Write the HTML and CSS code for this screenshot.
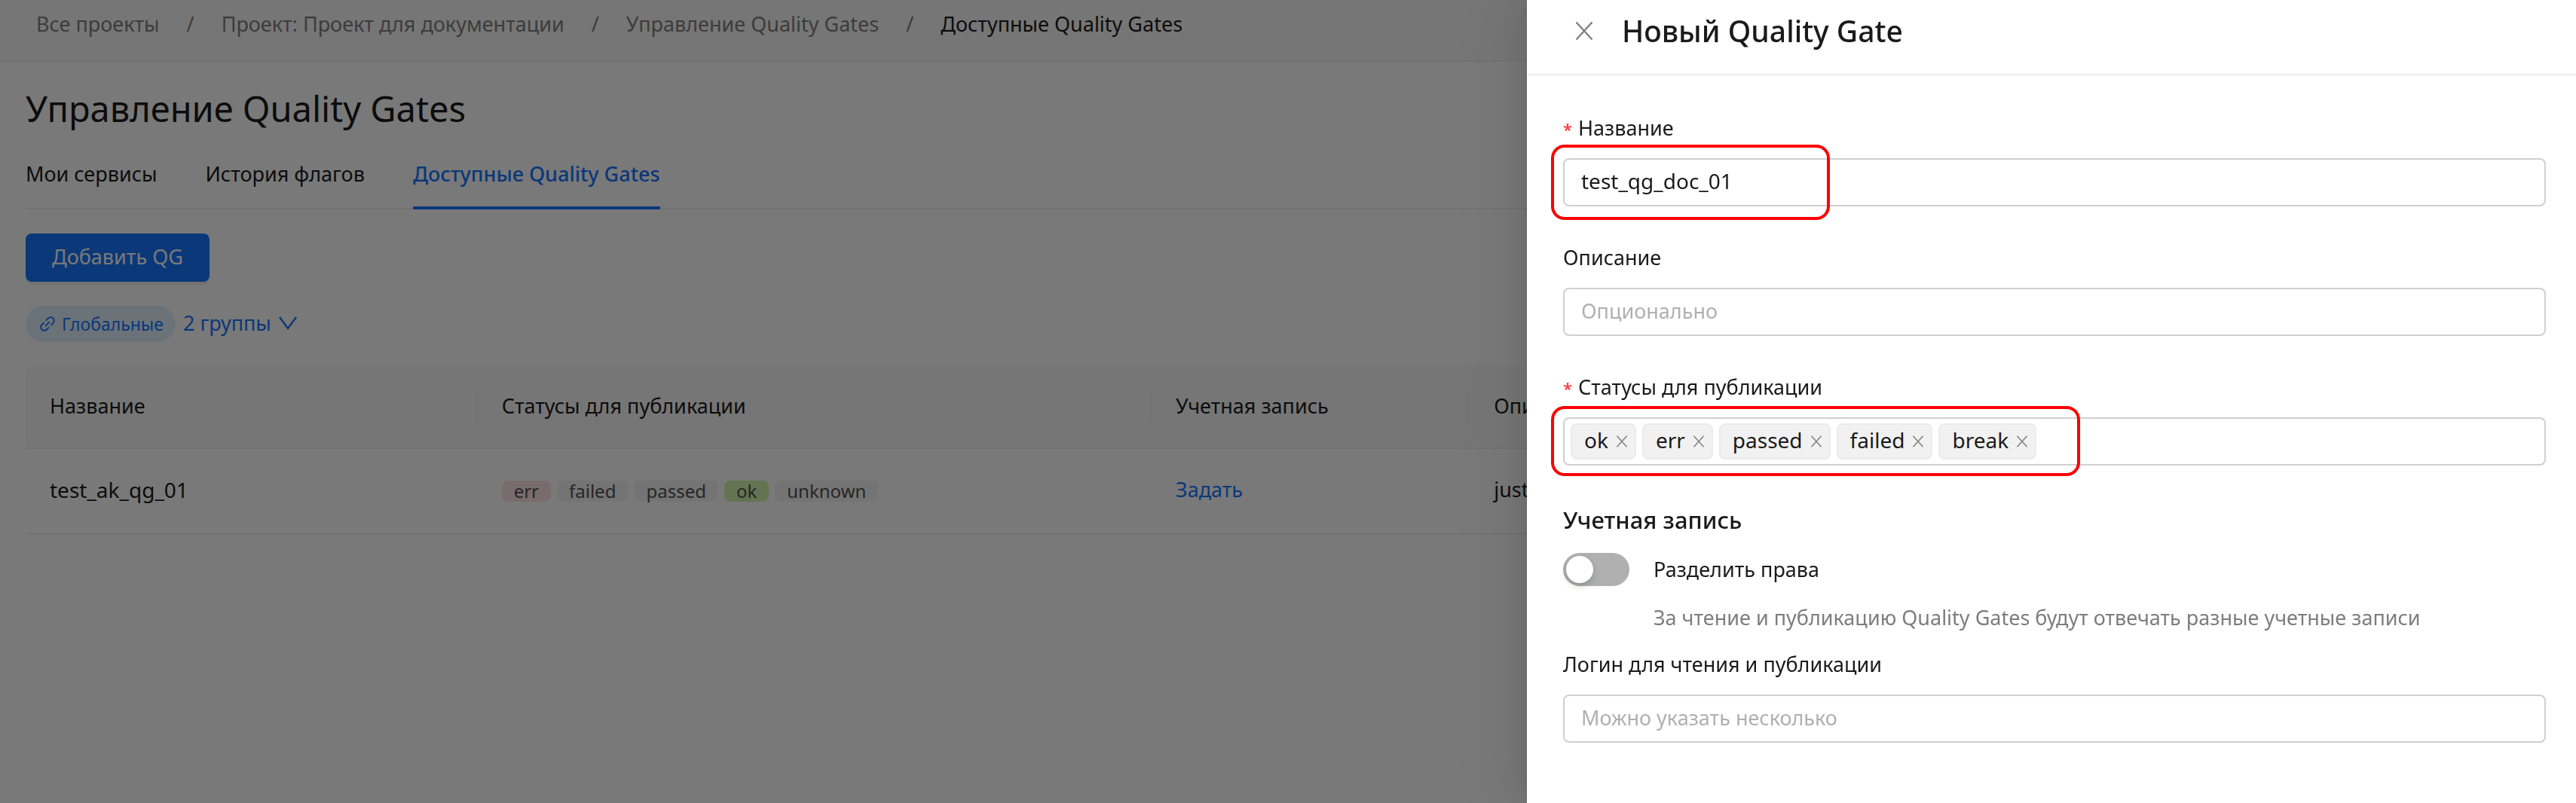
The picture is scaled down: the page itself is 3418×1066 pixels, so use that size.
FILE: index.html
```html
<!DOCTYPE html>
<html lang="ru">
<head>
<meta charset="utf-8">
<meta name="viewport" content="width=device-width, initial-scale=1">
<title>Доступные Quality Gates</title>
<link rel="stylesheet" href="styles.css">
</head>
<body>
<svg class="sprite" aria-hidden="true">
  <symbol id="icon-close" viewBox="0 0 32 32"><path d="M5.500 4.500 26.500 27.500M26.500 4.500 5.500 27.500" fill="none" stroke="currentColor" stroke-width="2.400"/></symbol>
  <symbol id="icon-down" viewBox="0 0 24 24"><path d="M1 4 12 19 23 4" fill="none" stroke="currentColor" stroke-width="2.400"/></symbol>
  <symbol id="icon-link" viewBox="0 0 1024 1024"><path fill="currentColor" d="M574 665.400a8.030 8.030 0 0 0-11.300 0L446.500 781.600c-53.800 53.800-144.600 59.500-204 0-59.500-59.500-53.800-150.200 0-204l116.200-116.200c3.100-3.100 3.100-8.200 0-11.300l-39.800-39.800a8.030 8.030 0 0 0-11.300 0L191.400 526.500c-84.600 84.600-84.600 221.500 0 306s221.500 84.600 306 0l116.200-116.200c3.100-3.100 3.100-8.200 0-11.300L574 665.400zm258.600-474c-84.600-84.600-221.500-84.600-306 0L410.300 307.600a8.030 8.030 0 0 0 0 11.300l39.700 39.700c3.100 3.100 8.200 3.100 11.300 0l116.200-116.200c53.800-53.800 144.600-59.500 204 0 59.500 59.500 53.800 150.200 0 204L665.300 562.600a8.030 8.030 0 0 0 0 11.300l39.800 39.800c3.100 3.100 8.200 3.100 11.300 0l116.200-116.200c84.500-84.600 84.500-221.500 0-306.100zM610.100 372.300a8.030 8.030 0 0 0-11.300 0L372.300 598.700a8.030 8.030 0 0 0 0 11.300l39.600 39.600c3.100 3.100 8.200 3.100 11.300 0l226.400-226.400c3.100-3.100 3.100-8.200 0-11.300l-39.500-39.600z"/></symbol>
</svg>

<div class="page">
  <nav class="breadcrumbs" aria-label="Навигация">
    <a href="#">Все проекты</a><span>/</span>
    <a href="#">Проект: Проект для документации</a><span>/</span>
    <a href="#">Управление Quality Gates</a><span>/</span>
    <span class="current">Доступные Quality Gates</span>
  </nav>
  <main class="content">
    <h1 class="title">Управление Quality Gates</h1>
    <nav class="tabs">
      <a class="tab" href="#">Мои сервисы</a>
      <a class="tab" href="#">История флагов</a>
      <a class="tab active" href="#">Доступные Quality Gates</a>
    </nav>
    <button class="primary" type="button">Добавить QG</button>
    <div class="groups">
      <a class="chip" href="#"><svg class="icon-link"><use href="#icon-link"/></svg>Глобальные</a>
      <button class="more" type="button">2 группы <svg class="icon-down"><use href="#icon-down"/></svg></button>
    </div>
    <table class="table">
      <colgroup><col class="col-name"><col class="col-status"><col class="col-account"><col></colgroup>
      <thead>
        <tr><th>Название</th><th>Статусы для публикации</th><th>Учетная запись</th><th>Описание</th></tr>
      </thead>
      <tbody>
        <tr>
          <td class="cell-name">test_ak_qg_01</td>
          <td class="cell-tags"><div class="tags"><span class="tag red">err</span><span class="tag">failed</span><span class="tag">passed</span><span class="tag green">ok</span><span class="tag">unknown</span></div></td>
          <td><a class="link" href="#">Задать</a></td>
          <td>just</td>
        </tr>
      </tbody>
    </table>
  </main>
</div>

<div class="mask"></div>

<aside class="drawer" role="dialog" aria-labelledby="drawer-title">
  <header class="drawer-header">
    <button class="close" type="button" aria-label="Закрыть"><svg class="icon-close"><use href="#icon-close"/></svg></button>
    <h2 class="drawer-title" id="drawer-title">Новый Quality Gate</h2>
  </header>
  <form class="form">
    <div class="field">
      <label class="label required" for="name">Название</label>
      <div class="control">
        <input class="input" id="name" type="text" value="test_qg_doc_01">
        <div class="highlight highlight-name"></div>
      </div>
    </div>
    <div class="field">
      <label class="label" for="description">Описание</label>
      <input class="input" id="description" type="text" placeholder="Опционально">
    </div>
    <div class="field">
      <label class="label required" for="statuses">Статусы для публикации</label>
      <div class="control">
        <div class="input multi">
          <span class="item">ok<button type="button" aria-label="Удалить ok"><svg class="icon-remove"><use href="#icon-close"/></svg></button></span>
          <span class="item">err<button type="button" aria-label="Удалить err"><svg class="icon-remove"><use href="#icon-close"/></svg></button></span>
          <span class="item">passed<button type="button" aria-label="Удалить passed"><svg class="icon-remove"><use href="#icon-close"/></svg></button></span>
          <span class="item">failed<button type="button" aria-label="Удалить failed"><svg class="icon-remove"><use href="#icon-close"/></svg></button></span>
          <span class="item">break<button type="button" aria-label="Удалить break"><svg class="icon-remove"><use href="#icon-close"/></svg></button></span>
          <input class="multi-search" id="statuses" type="text">
        </div>
        <div class="highlight highlight-statuses"></div>
      </div>
    </div>
    <h3 class="section">Учетная запись</h3>
    <div class="switch-row">
      <input class="switch" id="split" type="checkbox" role="switch">
      <label for="split">Разделить права</label>
      <p class="hint">За чтение и публикацию Quality Gates будут отвечать разные учетные записи</p>
    </div>
    <div class="field">
      <label class="label" for="login">Логин для чтения и публикации</label>
      <input class="input" id="login" type="text" placeholder="Можно указать несколько">
    </div>
  </form>
</aside>
</body>
</html>
```

FILE: styles.css
```css
* { box-sizing: border-box; }

body {
  margin: 0;
  overflow: hidden;
  background: #fff;
  color: #1a1a1a;
  font: 27px/44px "Noto Sans", "Open Sans", sans-serif;
}

h1, h2, h3, p { margin: 0; font-weight: 400; }
a { color: inherit; text-decoration: none; }
button, input { font: inherit; color: inherit; }
button { padding: 0; border: 0; background: none; cursor: pointer; }
svg { display: block; flex: none; }
.sprite { position: absolute; width: 0; height: 0; }

.page { min-height: 100vh; white-space: nowrap; }

.breadcrumbs {
  display: flex;
  gap: 36px;
  padding: 10px 48px 26px;
  border-bottom: 2px solid #f3f3f3;
  background: #f9f9f9;
  color: #7f7f7f;
}
.current { color: #1a1a1a; }

.content { padding: 30px 34px; }
.title { margin-bottom: 9px; font-size: 47px; line-height: 64px; }

.tabs { display: flex; gap: 64px; border-bottom: 2px solid #f0f0f0; }
.tab { margin-bottom: -2px; padding: 24px 0 21px; border-bottom: 4px solid transparent; }
.tab.active { border-color: #1677ff; color: #1677ff; font-weight: 500; }

.primary {
  display: block;
  height: 64px;
  margin: 32px 0;
  padding: 0 35px 2px;
  border-radius: 8px;
  background: #1677ff;
  box-shadow: 0 4px 0 #f3f3f3;
  color: #fff;
}

.groups { display: flex; gap: 10px; margin-bottom: 32px; color: #1677ff; }
.chip {
  display: flex;
  align-items: center;
  gap: 6px;
  height: 48px;
  padding: 0 16px;
  border-radius: 24px;
  background: #e1f3ff;
  font-size: 23px;
}
.icon-link { width: 26px; height: 26px; }
.more { display: flex; align-items: center; gap: 10px; height: 46px; }
.icon-down { width: 24px; height: 24px; }

.table { width: 100%; border-collapse: separate; border-spacing: 0; table-layout: fixed; }
.col-name { width: 17.9%; }
.col-status { width: 26.7%; }
.col-account { width: 12.6%; }
.table th {
  position: relative;
  padding: 31px 32px 33px;
  border-bottom: 2px solid #f0f0f0;
  background: #f9f9f9;
  font-weight: 400;
  text-align: left;
}
.table th:first-child { border-top-left-radius: 8px; }
.table th:last-child { border-top-right-radius: 8px; }
.table th:not(:last-child)::after {
  content: "";
  position: absolute;
  top: 32px;
  right: 0;
  width: 2px;
  height: 44px;
  background: #f0f0f0;
}
.table td { padding: 32px 32px 36px; border-bottom: 2px solid #f0f0f0; }
.table .cell-name { font-size: 28px; }
.table .cell-tags { padding-bottom: 32px; }
.link { color: #1677ff; }

.tags { display: flex; gap: 8px; }
.tag {
  padding: 0 16px;
  border-radius: 8px;
  background: #f5f5f5;
  color: #505050;
  font-size: 24px;
  line-height: 28px;
}
.tag.red { background: #ffe4e4; }
.tag.green { background: #d3f2ad; }

.mask { position: fixed; inset: 0; background: rgba(0, 0, 0, 0.525); }

.drawer {
  position: fixed;
  top: 0;
  right: 0;
  bottom: 0;
  width: min(1392px, 100%);
  overflow: hidden;
  background: #fff;
  box-shadow: -12px 0 32px rgba(0, 0, 0, 0.08), -6px 0 12px -8px rgba(0, 0, 0, 0.12), -18px 0 96px 32px rgba(0, 0, 0, 0.05);
}
.drawer-header {
  display: flex;
  align-items: center;
  gap: 34px;
  padding: 13px 60px 29px;
  border-bottom: 2px solid #ececec;
}
.drawer-title { font-size: 39px; line-height: 56px; font-weight: 500; }
.close { color: #808080; }
.icon-close { width: 32px; height: 32px; }

.form { padding: 48px 40px 48px 48px; }
.field { display: flex; flex-direction: column; gap: 18px; margin-bottom: 46px; }
.label { height: 44px; }
.required::before { content: "*"; margin-right: 8px; color: #ff3b42; font-size: 22px; font-weight: 600; line-height: 22px; }
.control { position: relative; }
.input {
  display: block;
  width: 100%;
  height: 64px;
  padding: 0 22px 4px;
  border: 2px solid #d0d0d0;
  border-radius: 8px;
  outline: 0;
  background: #fff;
  font-size: 28px;
}
.input::placeholder { color: #b0b0b0; font-size: 27px; opacity: 1; }

.multi { display: flex; align-items: center; gap: 8px; padding: 0 8px; }
.item {
  display: flex;
  align-items: center;
  gap: 8px;
  height: 48px;
  padding: 0 7px 4px 16px;
  border: 2px solid #ebebeb;
  border-radius: 8px;
  background: #f1f1f1;
}
.item button { margin-top: 4px; color: #808080; }
.icon-remove { width: 20px; height: 20px; }
.multi-search { flex: 1; min-width: 0; border: 0; outline: 0; background: none; }

.highlight { position: absolute; border: 4px solid #f00; border-radius: 18px; pointer-events: none; }
.highlight-name { top: -18px; left: -16px; width: 370px; height: 100px; }
.highlight-statuses { top: -15px; left: -16px; width: 702px; height: 93px; }

.section { margin: 50px 0 22px; font-size: 31px; font-weight: 500; }
.switch-row {
  display: grid;
  grid-template-columns: 88px 1fr;
  gap: 20px 32px;
  margin-bottom: 18px;
}
.switch {
  display: flex;
  width: 88px;
  height: 44px;
  margin: 0;
  padding: 4px;
  border-radius: 22px;
  background: #b0b0b0;
  appearance: none;
}
.switch::before {
  content: "";
  width: 36px;
  height: 36px;
  border-radius: 50%;
  background: #fff;
  box-shadow: 0 4px 8px rgba(0, 35, 11, 0.2);
}
.switch:checked { justify-content: flex-end; background: #1677ff; }
.hint { grid-column: 2; color: #7d7d7d; }
```
